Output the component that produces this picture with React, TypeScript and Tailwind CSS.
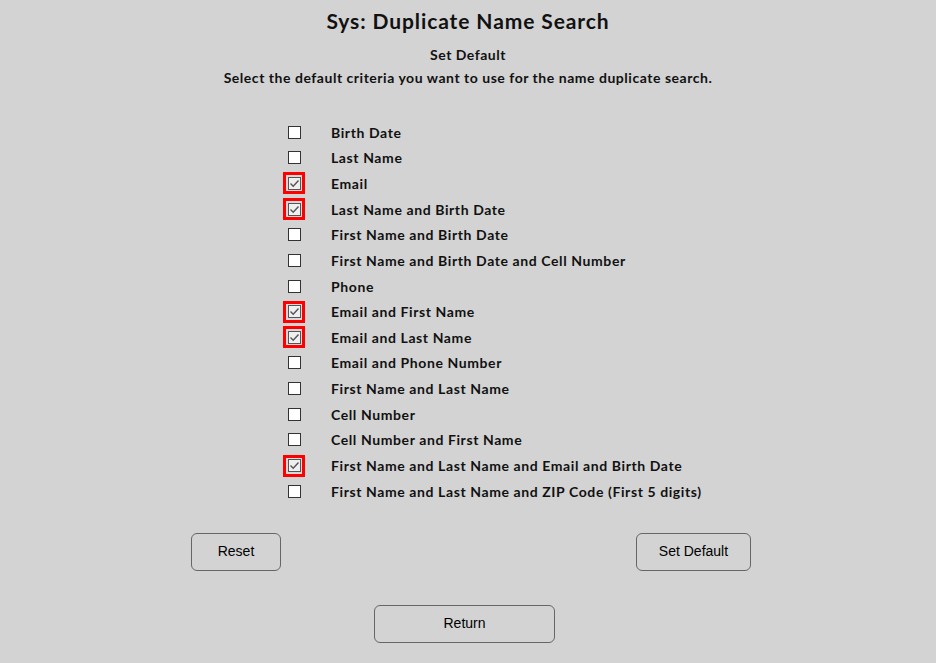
import { useState } from "react"

const criteria = [
  { label: "Birth Date", on: false },
  { label: "Last Name", on: false },
  { label: "Email", on: true },
  { label: "Last Name and Birth Date", on: true },
  { label: "First Name and Birth Date", on: false },
  { label: "First Name and Birth Date and Cell Number", on: false },
  { label: "Phone", on: false },
  { label: "Email and First Name", on: true },
  { label: "Email and Last Name", on: true },
  { label: "Email and Phone Number", on: false },
  { label: "First Name and Last Name", on: false },
  { label: "Cell Number", on: false },
  { label: "Cell Number and First Name", on: false },
  { label: "First Name and Last Name and Email and Birth Date", on: true },
  { label: "First Name and Last Name and ZIP Code (First 5 digits)", on: false },
]

function Box({ checked, onClick }: { checked: boolean; onClick: () => void }) {
  if (!checked) {
    return (
      <button onClick={onClick} className="w-[22px] h-[22px] flex items-center justify-center">
        <span className="block w-[13px] h-[13px] bg-white border border-[#333]" />
      </button>
    )
  }
  return (
    <button
      onClick={onClick}
      className="w-[22px] h-[22px] flex items-center justify-center border-[3px] border-[#ff0000] bg-[#d8d8d8]"
    >
      <span className="w-[13px] h-[13px] bg-[#efefef] border border-[#555] flex items-center justify-center">
        <svg width="11" height="11" viewBox="0 0 11 11">
          <path d="M1.5 5.5 L4.2 8.2 L9.5 2.5" fill="none" stroke="#555" strokeWidth="1.4" />
        </svg>
      </span>
    </button>
  )
}

export default function App() {
  const [items, setItems] = useState(criteria)

  const toggle = (i: number) =>
    setItems(items.map((c, j) => (j === i ? { ...c, on: !c.on } : c)))

  return (
    <div className="w-[936px] h-[663px] bg-[#d3d3d3] text-[#111] font-['Lato','Noto_Sans',sans-serif] overflow-hidden">
      <h1 className="pt-[7px] text-center text-[21px] leading-[28px] font-bold tracking-[0.9px]">
        Sys: Duplicate Name Search
      </h1>
      <h2 className="mt-[10px] text-center text-[14px] leading-[20px] font-bold tracking-[0.5px]">Set Default</h2>
      <p className="mt-[3px] text-center text-[14px] leading-[20px] font-bold tracking-[0.53px]">
        Select the default criteria you want to use for the name duplicate search.
      </p>

      {/* criteria list */}
      <div className="mt-[31.4px] ml-[283px] flex flex-col">
        {items.map((c, i) => (
          <div key={c.label} className="h-[25.65px] flex items-center">
            <div className="w-[48px]">
              <Box checked={c.on} onClick={() => toggle(i)} />
            </div>
            <span className="text-[14px] font-bold tracking-[0.6px]">{c.label}</span>
          </div>
        ))}
      </div>

      <div className="mt-[28.6px] ml-[191px] w-[560px] flex justify-between font-['Liberation_Sans',Arial,sans-serif] text-[14px] text-black">
        <button
          onClick={() => setItems(criteria.map((c) => ({ ...c, on: false })))}
          className="w-[90px] h-[38px] rounded-[6px] border border-[#666] bg-[#d3d3d3]"
        >
          Reset
        </button>
        <button className="w-[115px] h-[38px] rounded-[6px] border border-[#666] bg-[#d3d3d3]">
          Set Default
        </button>
      </div>

      <div className="mt-[34px] ml-[374px]">
        <button className="w-[181px] h-[38px] rounded-[6px] border border-[#666] bg-[#d3d3d3] font-['Liberation_Sans',Arial,sans-serif] text-[14px] text-black">
          Return
        </button>
      </div>
    </div>
  )
}
